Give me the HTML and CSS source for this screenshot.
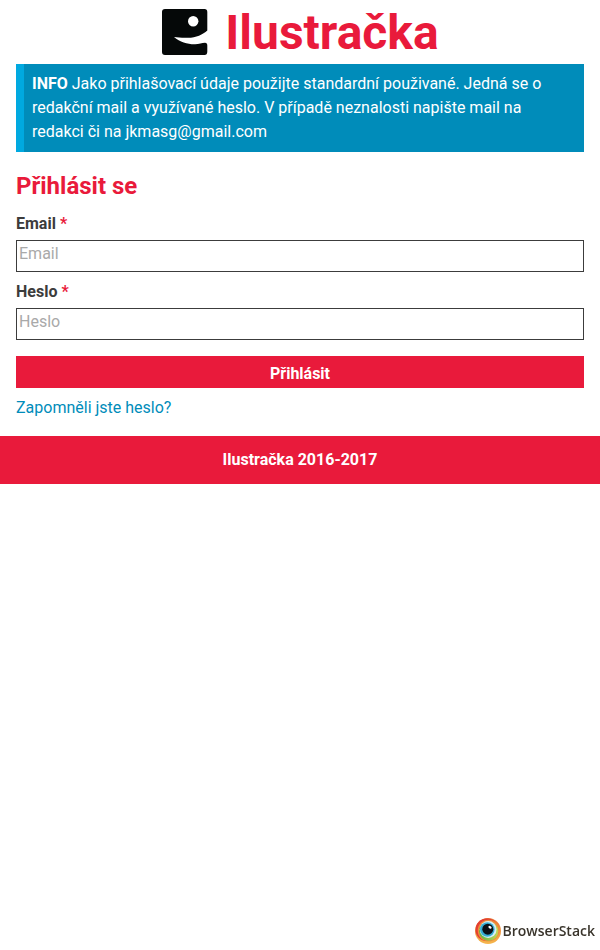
FILE: index.html
```html
<!DOCTYPE html>
<html lang="cs">
<head>
<meta charset="utf-8">
<meta name="viewport" content="width=device-width, initial-scale=1">
<title>Ilustračka</title>
<link rel="stylesheet" href="styles.css">
</head>
<body>
<header class="brand">
  <svg class="brand-logo" viewBox="0 0 48 48" aria-hidden="true">
    <path fill="#050808" d="M4 1H43.500Q46.300 1 46.300 4V22.500C42 26.500 35 29.800 27 29.800C21.500 30 17 29.600 13 29C19 34 27 36.500 34 36.300C38 36.200 41 35 44 34.800Q46.300 34.800 46.300 37.500V43.500Q46.300 47 43.500 47H4Q1 47 1 44V4Q1 1 4 1Z"/>
    <circle cx="32.200" cy="13.300" r="5.200" fill="#fff"/>
  </svg>
  <h1 class="brand-name">Ilustračka</h1>
</header>
<main class="content">
  <p class="notice"><strong>INFO</strong> Jako přihlašovací údaje použijte standardní použivané. Jedná se o redakční mail a využívané heslo. V případě neznalosti napište mail na redakci či na jkmasg@gmail.com</p>
  <h2 class="title">Přihlásit se</h2>
  <form class="login">
    <label class="label" for="email">Email <span class="required">*</span></label>
    <input class="field" id="email" type="email" placeholder="Email" required>
    <label class="label" for="password">Heslo <span class="required">*</span></label>
    <input class="field" id="password" type="password" placeholder="Heslo" required>
    <button class="submit" type="submit">Přihlásit</button>
  </form>
  <a class="forgot" href="#">Zapomněli jste heslo?</a>
</main>
<footer class="footer">Ilustračka 2016-2017</footer>
<div class="badge">
  <svg class="badge-logo" viewBox="0 0 26 26" aria-hidden="true">
    <defs>
      <linearGradient id="rim" x1="0" y1="0" x2="0" y2="1"><stop offset="0" stop-color="#e66f32"/><stop offset="1" stop-color="#f6b84e"/></linearGradient>
      <linearGradient id="lime" x1="0" y1="0" x2="1" y2="0"><stop offset="0" stop-color="#5fb447"/><stop offset="1" stop-color="#c3d552"/></linearGradient>
    </defs>
    <circle cx="13" cy="13" r="13" fill="url(#rim)"/>
    <circle cx="11.800" cy="11.800" r="11.300" fill="#e43e32"/>
    <circle cx="13.500" cy="12.500" r="10.800" fill="#f08a3a"/>
    <circle cx="13.700" cy="13.200" r="9.600" fill="url(#lime)"/>
    <circle cx="13.200" cy="11.500" r="8.400" fill="#d6eff7"/>
    <circle cx="12.300" cy="11.500" r="7.300" fill="#35add3"/>
    <circle cx="12.800" cy="11.200" r="5.500" fill="#0b1116"/>
    <ellipse cx="15" cy="9.300" rx="1.800" ry="1.200" fill="#fff" transform="rotate(35 15 9.300)"/>
  </svg>
  <span>BrowserStack</span>
</div>
</body>
</html>
```
FILE: styles.css
```css
* {
  box-sizing: border-box;
}

body {
  margin: 0;
  background: #fff;
  color: #3c3c3c;
  font: 16px/24px Roboto, "Liberation Sans", sans-serif;
}

.brand {
  display: flex;
  justify-content: center;
  gap: 16px;
  height: 64px;
  padding: 8px 0;
}

.brand-logo {
  width: 48px;
  height: 48px;
}

.brand-name {
  margin: 0;
  color: #e91a3b;
  font-size: 48px;
  line-height: 50px;
}

.content {
  padding: 0 16px 16px;
}

.notice {
  margin: 0 0 16px;
  padding: 8px;
  border-left: 8px solid #00a9e0;
  background: #008cba;
  color: #fff;
}

.title {
  margin: 0 0 8px;
  color: #e91a3b;
  font-size: 24px;
  line-height: 36px;
}

.login {
  display: flex;
  flex-direction: column;
}

.label {
  margin-bottom: 4px;
  font-weight: 700;
}

.required {
  color: #e91a3b;
}

.field {
  width: 100%;
  height: 32px;
  margin: 0 0 8px;
  padding: 0 2px 6px;
  border: 1px solid #3c3c3c;
  border-radius: 0;
  background: #fff;
  color: inherit;
  font: inherit;
}

.field::placeholder {
  color: #a9a9a9;
  opacity: 1;
}

.submit {
  height: 32px;
  margin: 8px 0;
  padding: 4px 0 0;
  border: 0;
  background: #e91a3b;
  color: #fff;
  font: inherit;
  font-weight: 700;
}

.forgot {
  display: block;
  color: #008cba;
  text-decoration: none;
}

.footer {
  padding: 12px 16px;
  background: #e91a3b;
  color: #fff;
  font-weight: 700;
  text-align: center;
}

.badge {
  position: fixed;
  right: 5px;
  bottom: 6px;
  display: flex;
  align-items: center;
  gap: 2px;
  color: #39342b;
  font: 600 14px/26px "Open Sans", sans-serif;
}

.badge-logo {
  width: 26px;
  height: 26px;
}
```
